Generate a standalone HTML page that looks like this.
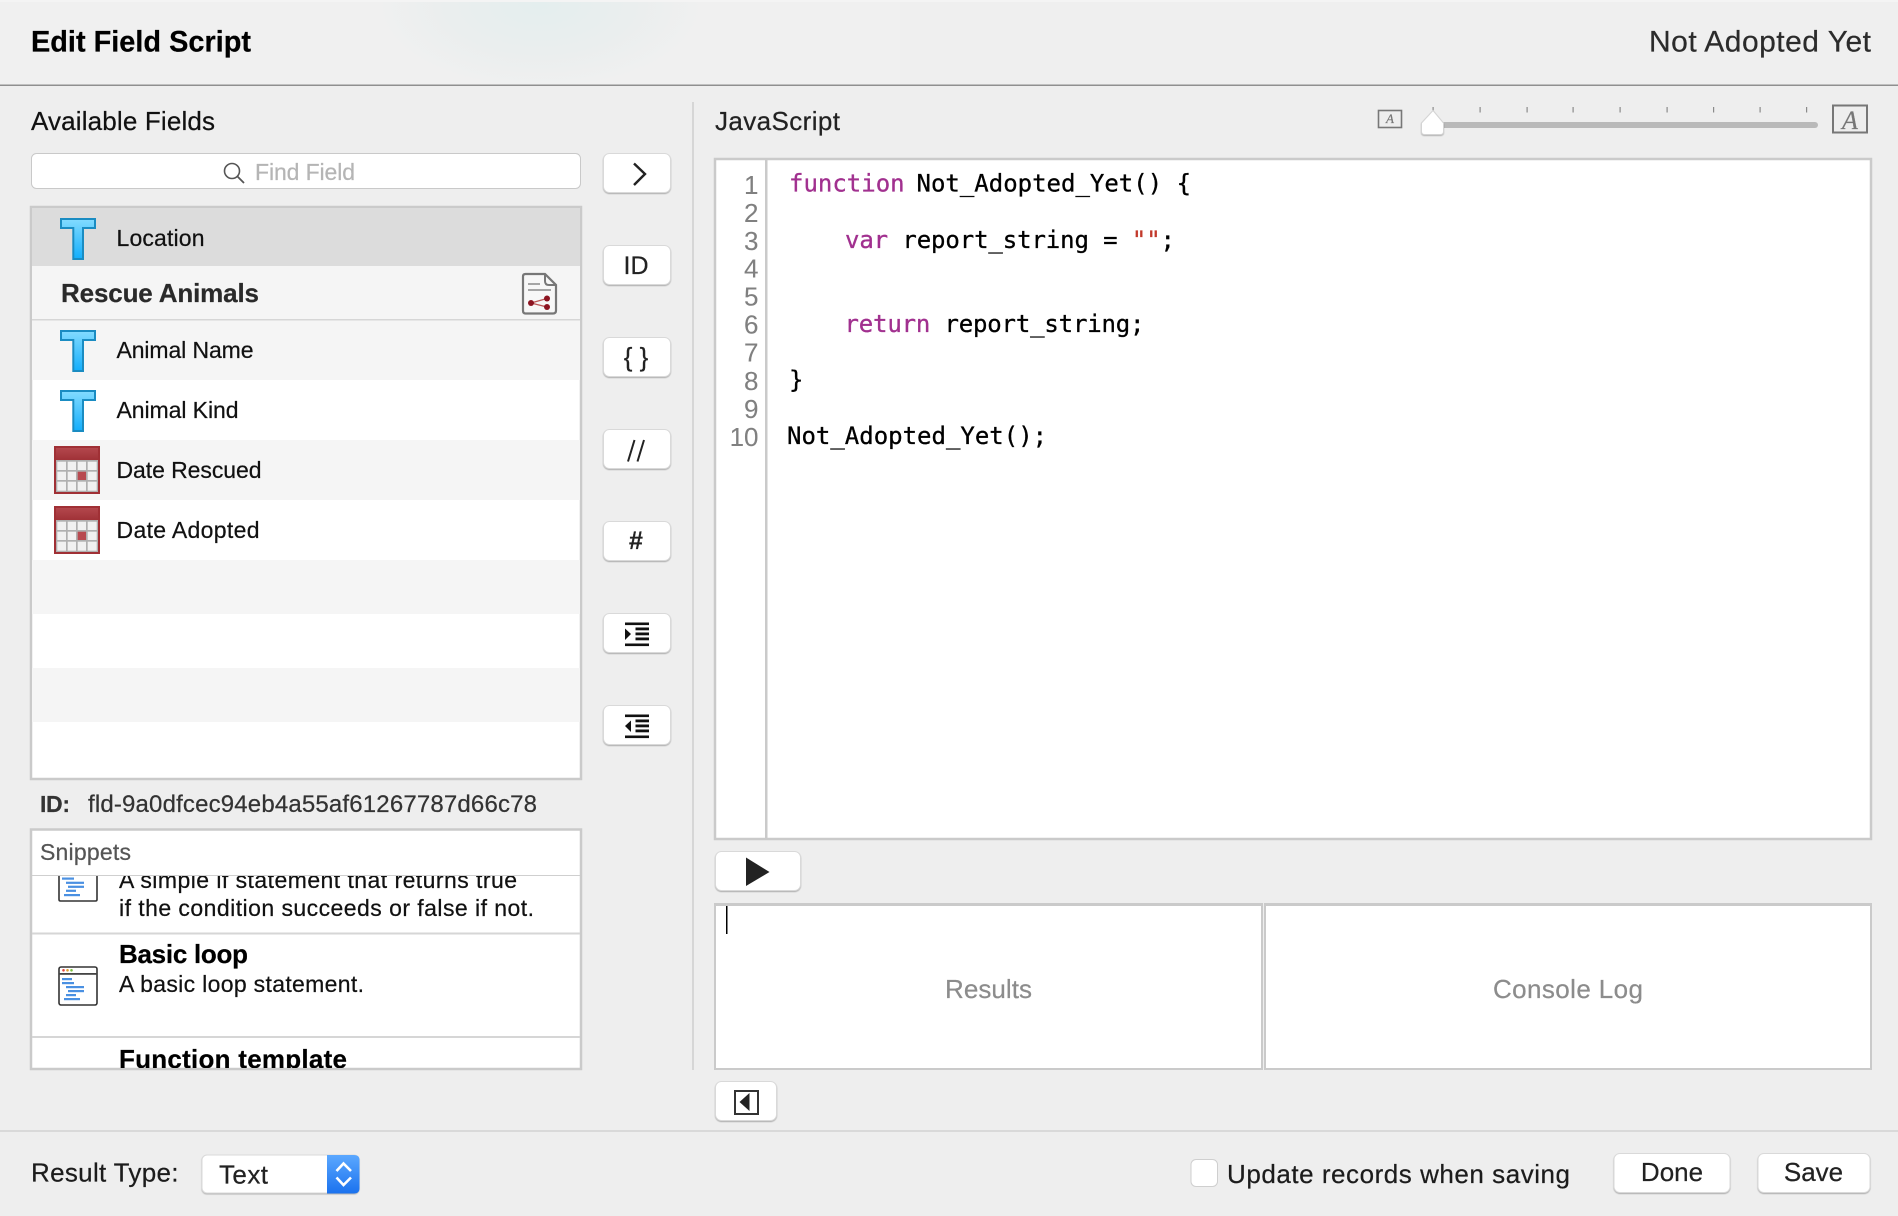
<!DOCTYPE html>
<html>
<head>
<meta charset="utf-8">
<title>Edit Field Script</title>
<style>
html,body{margin:0;padding:0;background:#eeeeee;width:1898px;height:1216px;overflow:hidden}
svg{display:block}
text{font-family:"Liberation Sans",Arial,sans-serif;font-size:23px;color:#111;fill:currentColor;stroke:currentColor;stroke-width:.22}
tspan{fill:currentColor;stroke:currentColor}
.b{font-weight:bold}
.f26{font-size:26px}
.m{font-family:"DejaVu Sans Mono","Liberation Mono",monospace;font-size:24px;color:#000;stroke-width:.3}
.k{color:#a1308f}
.s{color:#c2392b}
.n{font-size:26px;color:#808080;text-anchor:end;stroke-width:.1}
.btn{fill:#fff;stroke:#d9d9d9;stroke-width:1;filter:drop-shadow(0 1px .6px rgba(0,0,0,.28))}
.box{fill:#fff;stroke:#cacaca;stroke-width:2.5}
.mid{text-anchor:middle}
</style>
</head>
<body>
<svg width="1898" height="1216" viewBox="0 0 1898 1216" xmlns="http://www.w3.org/2000/svg">
<defs>
<linearGradient id="tg" x1="0" y1="0" x2="0" y2="1"><stop offset="0" stop-color="#83dbff"/><stop offset="1" stop-color="#12aefc"/></linearGradient>
<linearGradient id="cg" x1="0" y1="0" x2="0" y2="1"><stop offset="0" stop-color="#b3474d"/><stop offset="1" stop-color="#a03237"/></linearGradient>
<linearGradient id="sg" x1="0" y1="0" x2="0" y2="1"><stop offset="0" stop-color="#5ba8ff"/><stop offset="1" stop-color="#1b72ee"/></linearGradient>
<radialGradient id="hg"><stop offset="0" stop-color="#e4eeee"/><stop offset=".55" stop-color="#eaeeee"/><stop offset="1" stop-color="#f0f0f0"/></radialGradient>
<clipPath id="sn"><rect x="31" y="876" width="550" height="192"/></clipPath>
<clipPath id="hc"><rect x="0" y="2" width="1000" height="82"/></clipPath>
<g id="ticon"><path d="M61 219H95V228H83V259H73.300V228H61Z" fill="url(#tg)" stroke="#1a8cc2" stroke-width="2"/></g>
<g id="cal">
<rect x="54" y="0" width="46" height="48" fill="#a03035"/>
<rect x="56" y="2" width="42" height="12" fill="url(#cg)"/>
<rect x="56" y="14" width="42" height="32" fill="#b0b0b0"/>
<g fill="#f1f1f1">
<rect x="57.300" y="15.700" width="8.700" height="8.300"/><rect x="67.700" y="15.700" width="8.300" height="8.300"/><rect x="77.700" y="15.700" width="8.300" height="8.300"/><rect x="87.700" y="15.700" width="9" height="8.300"/>
<rect x="57.300" y="25.700" width="8.700" height="8.300"/><rect x="67.700" y="25.700" width="8.300" height="8.300"/><rect x="87.700" y="25.700" width="9" height="8.300"/>
<rect x="57.300" y="35.700" width="8.700" height="9"/><rect x="67.700" y="35.700" width="8.300" height="9"/><rect x="77.700" y="35.700" width="8.300" height="9"/><rect x="87.700" y="35.700" width="9" height="9"/>
</g>
<rect x="77.700" y="25.700" width="8.300" height="8.300" fill="#b84a50"/>
</g>
</defs>

<!-- background -->
<rect width="1898" height="1216" fill="#eeeeee"/>
<rect width="1898" height="85" fill="#efefef"/>
<rect width="900" height="85" fill="#f0f0f0"/>
<ellipse cx="540" cy="5" rx="165" ry="85" fill="url(#hg)" clip-path="url(#hc)"/>
<rect width="1898" height="2" fill="#f4f4f4"/>
<rect y="84.500" width="1898" height="1.500" fill="#8f8f8f"/>
<rect x="692" y="102" width="2" height="968" fill="#d6d6d6"/>
<rect y="1130" width="1898" height="2" fill="#d9d9d9"/>

<!-- header -->
<text class="b" x="31" y="51.500" style="font-size:30px;color:#000" textLength="220" lengthAdjust="spacingAndGlyphs">Edit Field Script</text>
<text x="1649" y="51.500" style="font-size:30px;color:#2b2b2b" textLength="222">Not Adopted Yet</text>

<!-- left -->
<text class="f26" x="31" y="130" textLength="184">Available Fields</text>
<rect x="31.500" y="153.500" width="549" height="35" rx="5" fill="#fff" stroke="#c9c9c9"/>
<circle cx="232" cy="171" r="7.500" fill="none" stroke="#555" stroke-width="1.600"/>
<path d="M237.500 176.500L244 183" stroke="#555" stroke-width="1.800" fill="none"/>
<text x="255" y="180" style="color:#b5b5b5" textLength="100">Find Field</text>

<!-- field list -->
<rect class="box" x="31" y="207" width="550" height="572"/>
<rect x="32" y="208" width="548" height="58" fill="#dcdcdc"/>
<rect x="32" y="266" width="548" height="53" fill="#f5f5f5"/>
<rect x="32" y="319" width="548" height="1.500" fill="#d6d6d6"/>
<rect x="32" y="320.500" width="548" height="59.500" fill="#f5f5f5"/>
<rect x="32" y="440" width="548" height="60" fill="#f5f5f5"/>
<rect x="32" y="560" width="548" height="54" fill="#f5f5f5"/>
<rect x="32" y="668" width="548" height="54" fill="#f5f5f5"/>

<use href="#ticon"/>
<use href="#ticon" y="112"/>
<use href="#ticon" y="172"/>
<use href="#cal" y="446"/>
<use href="#cal" y="506"/>
<text x="116.500" y="246" textLength="88">Location</text>
<text class="b f26" x="61" y="302" style="color:#2a2a2a" textLength="198">Rescue Animals</text>
<text x="116.500" y="358" textLength="137">Animal Name</text>
<text x="116.500" y="418" textLength="122">Animal Kind</text>
<text x="116.500" y="478" textLength="145">Date Rescued</text>
<text x="116.500" y="538" textLength="143">Date Adopted</text>

<!-- doc icon -->
<path d="M525.500 274H545L556 285V310.500Q556 313.500 553 313.500H525.500Q523 313.500 523 310.500V276.500Q523 274 525.500 274Z" fill="#f7f7f7" stroke="#777" stroke-width="2.200"/>
<path d="M545 274V281Q545 285 549 285H556" fill="none" stroke="#777" stroke-width="2"/>
<path d="M528 284H540M528 290H551" stroke="#8a8a8a" stroke-width="1.500"/>
<path d="M531 303L547 298.500M531 303L547 307" stroke="#b55" stroke-width="1.300"/>
<circle cx="531" cy="303" r="3" fill="#8c1420"/><circle cx="547" cy="298.500" r="3" fill="#8c1420"/><circle cx="547" cy="307" r="3" fill="#8c1420"/>

<!-- ID -->
<text class="b" x="40" y="812" style="color:#333" textLength="30">ID:</text>
<text x="88" y="812" style="font-size:24px;color:#333" textLength="449">fld-9a0dfcec94eb4a55af61267787d66c78</text>

<!-- snippets -->
<rect class="box" x="31" y="829.500" width="550" height="239.500"/>
<text x="40" y="860" style="color:#555" textLength="91">Snippets</text>
<rect x="32" y="875" width="548" height="1" fill="#cfcfcf"/>
<g clip-path="url(#sn)">
<text x="119" y="888" textLength="398">A simple if statement that returns true</text>
<text x="119" y="916" textLength="415">if the condition succeeds or false if not.</text>
<path d="M59 860V899.500Q59 901 60.500 901H95.500Q97 901 97 899.500V860" fill="#fff" stroke="#333" stroke-width="1.600"/>
<g fill="#4a90e2">
<rect x="62" y="877.500" width="12" height="2.200"/><rect x="66" y="881.700" width="18" height="2.200"/><rect x="68" y="885.700" width="16" height="2.200"/><rect x="66" y="889.700" width="10" height="2.200"/><rect x="64" y="894" width="16" height="2.200"/>
</g>
<rect x="32" y="932.500" width="548" height="2" fill="#d6d6d6"/>
<text class="b f26" x="119" y="963" style="color:#000" textLength="129">Basic loop</text>
<text x="119" y="992" textLength="245">A basic loop statement.</text>
<rect x="59" y="967" width="38" height="38" rx="2" fill="#fff" stroke="#333" stroke-width="1.600"/>
<rect x="59" y="973" width="38" height="1.800" fill="#444"/>
<circle cx="63.500" cy="970.300" r="1.300" fill="#e0443e"/><circle cx="67.500" cy="970.300" r="1.300" fill="#e0a030"/><circle cx="71.500" cy="970.300" r="1.300" fill="#7cc040"/>
<g fill="#4a90e2">
<rect x="62" y="978" width="10" height="2.200"/><rect x="62" y="982" width="12" height="2.200"/><rect x="66" y="986" width="18" height="2.200"/><rect x="68" y="990" width="16" height="2.200"/><rect x="66" y="994" width="10" height="2.200"/><rect x="64" y="998" width="16" height="2.200"/>
</g>
<rect x="32" y="1036" width="548" height="2" fill="#d6d6d6"/>
<text class="b f26" x="119" y="1068" style="color:#000" textLength="228">Function template</text>
</g>
<rect x="30" y="1068" width="552" height="2" fill="#cacaca"/>

<!-- middle buttons -->
<rect class="btn" x="603.500" y="153.500" width="67" height="39" rx="6"/>
<path d="M634 163.500L645 174L634 185" fill="none" stroke="#222" stroke-width="2.400"/>
<rect class="btn" x="603.500" y="245.500" width="67" height="39" rx="6"/>
<text class="mid" x="636" y="274" style="font-size:25px;color:#222">ID</text>
<rect class="btn" x="603.500" y="337.500" width="67" height="39" rx="6"/>
<text class="mid" x="636" y="366" style="font-size:26px;color:#222">{ }</text>
<rect class="btn" x="603.500" y="429.500" width="67" height="39" rx="6"/>
<path d="M628 461.500L634.500 440M637.500 461.500L644 440" stroke="#222" stroke-width="2" fill="none"/>
<rect class="btn" x="603.500" y="521.500" width="67" height="39" rx="6"/>
<text class="mid b" x="636" y="549" style="font-size:25px;color:#222">#</text>
<rect class="btn" x="603.500" y="613.500" width="67" height="39" rx="6"/>
<g fill="#111">
<rect x="625" y="622.500" width="24" height="2.600"/><rect x="635.500" y="627.500" width="13.500" height="2.800"/><rect x="635.500" y="632.500" width="13.500" height="2.800"/><rect x="635.500" y="637.500" width="13.500" height="2.800"/><rect x="625" y="643.500" width="24" height="2.600"/>
<path d="M625 628.500L631 634L625 640Z"/>
</g>
<rect class="btn" x="603.500" y="705.500" width="67" height="39" rx="6"/>
<g fill="#111">
<rect x="625" y="714.500" width="24" height="2.600"/><rect x="635.500" y="719.500" width="13.500" height="2.800"/><rect x="635.500" y="724.500" width="13.500" height="2.800"/><rect x="635.500" y="729.500" width="13.500" height="2.800"/><rect x="625" y="735.500" width="24" height="2.600"/>
<path d="M631 720.500L625 726L631 732Z"/>
</g>

<!-- right -->
<text x="715" y="130" class="f26" style="color:#222" textLength="125">JavaScript</text>

<!-- slider -->
<rect x="1378.500" y="110.500" width="23" height="17" fill="none" stroke="#777" stroke-width="1.600"/>
<text class="mid" x="1390" y="123" style="font-family:'Liberation Serif',serif;font-style:italic;font-size:13px;color:#777">A</text>
<rect x="1433" y="122" width="385" height="6" rx="3" fill="#b9b9b9"/>
<g fill="#8a8a8a">
<rect x="1432.500" y="107" width="1.200" height="5"/><rect x="1479.500" y="107" width="1.200" height="5.500"/><rect x="1526.500" y="107" width="1.200" height="5.500"/><rect x="1572.500" y="107" width="1.200" height="5.500"/><rect x="1619.500" y="107" width="1.200" height="5.500"/><rect x="1666.500" y="107" width="1.200" height="5.500"/><rect x="1713" y="107" width="1.200" height="5.500"/><rect x="1759.500" y="107" width="1.200" height="5.500"/><rect x="1806" y="107" width="1.200" height="5.500"/>
</g>
<path d="M1433 110.500L1443.500 123V131.500Q1443.500 134.500 1440.500 134.500H1424.500Q1421.500 134.500 1421.500 131.500V123Z" fill="#fff" stroke="#d4d4d4" stroke-width="1" style="filter:drop-shadow(0 1px .5px rgba(0,0,0,.25))"/>
<rect x="1833" y="105.500" width="34" height="27" fill="none" stroke="#777" stroke-width="2"/>
<text class="mid" x="1850" y="129" style="font-family:'Liberation Serif',serif;font-style:italic;font-size:26px;color:#777">A</text>

<!-- editor -->
<rect class="box" x="715" y="159" width="1156" height="680"/>
<rect x="765" y="159" width="2.500" height="680" fill="#cacaca"/>
<text class="n" x="758.500" y="194">1</text>
<text class="n" x="758.500" y="222">2</text>
<text class="n" x="758.500" y="250">3</text>
<text class="n" x="758.500" y="277.500">4</text>
<text class="n" x="758.500" y="305.500">5</text>
<text class="n" x="758.500" y="333.500">6</text>
<text class="n" x="758.500" y="361.500">7</text>
<text class="n" x="758.500" y="390">8</text>
<text class="n" x="758.500" y="418">9</text>
<text class="n" x="758.500" y="446">10</text>
<text class="m k" x="789" y="191.500">function</text>
<text class="m" x="916.500" y="191.500">Not_Adopted_Yet() {</text>
<text class="m" xml:space="preserve" x="845" y="248" textLength="330"><tspan class="k">var</tspan> report_string = <tspan class="s">""</tspan>;</text>
<text class="m" xml:space="preserve" x="844.500" y="332" textLength="300"><tspan class="k">return</tspan> report_string;</text>
<text class="m" x="789" y="388">}</text>
<text class="m" x="787" y="444">Not_Adopted_Yet();</text>

<!-- run -->
<rect class="btn" x="715.500" y="851.500" width="85" height="39" rx="6"/>
<path d="M746 857.500L769.500 872L746 886Z" fill="#222"/>

<!-- results -->
<rect x="714" y="903" width="549" height="167" fill="#cacaca"/>
<rect x="716" y="906" width="545" height="162" fill="#fff"/>
<rect x="1264" y="903" width="608" height="167" fill="#cacaca"/>
<rect x="1266" y="906" width="604" height="162" fill="#fff"/>
<rect x="726" y="906" width="1.500" height="28" fill="#000"/>
<text class="f26" x="945" y="998" style="color:#8c8c8c" textLength="87">Results</text>
<text class="f26" x="1493" y="998" style="color:#8c8c8c" textLength="150">Console Log</text>

<!-- collapse -->
<rect class="btn" x="715.500" y="1081.500" width="61" height="39" rx="6"/>
<rect x="735" y="1091" width="23" height="23" fill="none" stroke="#333" stroke-width="2"/>
<path d="M749.500 1093L739.500 1102L749.500 1111Z" fill="#222"/>

<!-- footer -->
<text class="f26" x="31" y="1181.500" style="color:#1c1c1c" textLength="147.500">Result Type:</text>
<rect x="202" y="1155" width="157" height="38" rx="5" fill="#fff" stroke="#d9d9d9" style="filter:drop-shadow(0 1px .6px rgba(0,0,0,.25))"/>
<path d="M327 1155H354Q359.500 1155 359.500 1160V1188Q359.500 1193.500 354 1193.500H327Z" fill="url(#sg)"/>
<path d="M336.500 1171L343.500 1163.500L351 1171M336.500 1177.500L343.500 1185L351 1177.500" fill="none" stroke="#fff" stroke-width="2.600"/>
<text class="f26" x="219" y="1183.500" style="color:#222" textLength="49">Text</text>

<rect x="1191" y="1159.500" width="26.500" height="27" rx="5" fill="#fff" stroke="#cfcfcf"/>
<text class="f26" x="1227" y="1183" style="color:#1c1c1c" textLength="343">Update records when saving</text>
<rect class="btn" x="1614" y="1153.500" width="116" height="39" rx="6"/>
<text class="f26 mid" x="1672" y="1181" style="color:#222">Done</text>
<rect class="btn" x="1758" y="1153.500" width="112" height="39" rx="6"/>
<text class="f26 mid" x="1813.500" y="1181" style="color:#222">Save</text>
</svg>
</body>
</html>
